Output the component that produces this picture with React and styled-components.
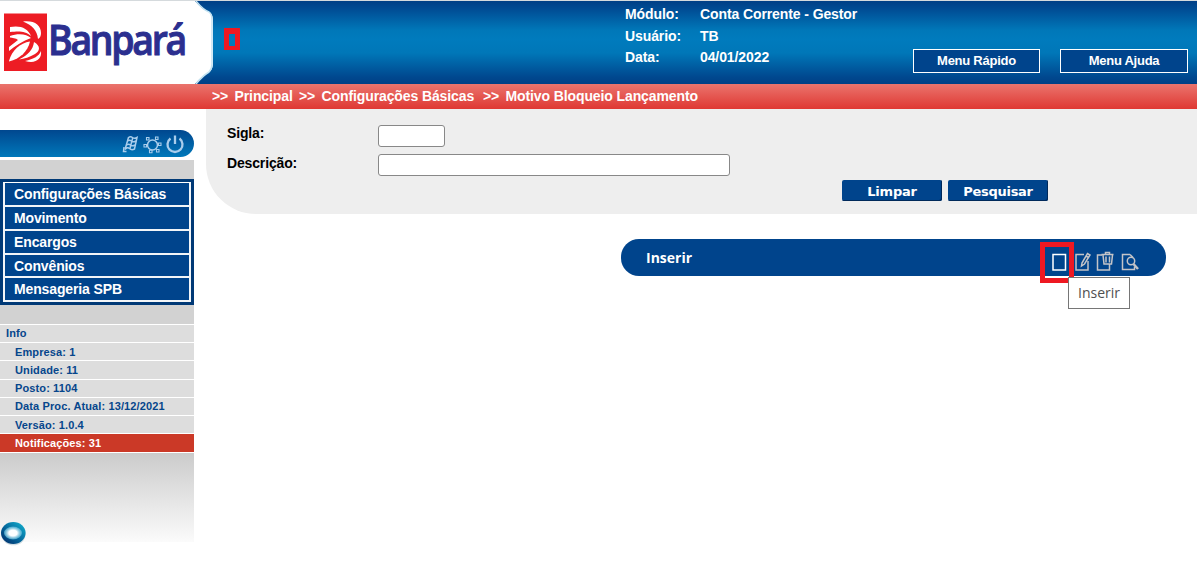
import React from 'react';
import styled, { createGlobalStyle } from 'styled-components';

const GlobalStyle = createGlobalStyle`
  * { box-sizing: border-box; }
  body {
    margin: 0;
    background: #fff;
    font-family: 'Liberation Sans', Arial, sans-serif;
    font-size: 14px;
    font-weight: bold;
    color: #000;
  }
`;

const Page = styled.div`
  width: 1197px;
  height: 565px;
  overflow: hidden;
`;

const Header = styled.header`
  height: 84px;
  display: flex;
  border-top: 1px solid #d5dadd;
  background: linear-gradient(#003f86 0, #004c94 8px, #0077b8 29px, #007bbd 38px, #0077b8 52px, #00488f 76px, #004085 83px);
  color: #fff;
`;

const LogoPanel = styled.div`
  width: 213px;
  height: 83px;
  svg { display: block; }
`;

const Marker = styled.span`
  width: 16px;
  height: 22px;
  margin: 27px 0 0 11px;
  border: 5px solid #ee1822;
  border-top-width: 6px;
  border-bottom-width: 4px;
`;

const Session = styled.dl`
  width: 288px;
  margin: 4px 0 0 385px;
  display: grid;
  grid-template-columns: 75px 1fr;
  grid-template-rows: 22px 21px 21px;
  line-height: 19px;
  letter-spacing: -0.1px;
  align-content: start;
`;
const Term = styled.dt``;
const Value = styled.dd`
  margin: 0;
  white-space: nowrap;
`;

const MenuButtons = styled.div`
  display: flex;
  gap: 20px;
  margin-top: 48px;
`;

const MenuButton = styled.button`
  width: ${(p) => p.$width}px;
  height: 24px;
  padding: 0 0 2px;
  border: 1px solid #fff;
  background: #00448c;
  color: #fff;
  font: bold 13px 'Liberation Sans', Arial, sans-serif;
  letter-spacing: -0.25px;
`;

const Breadcrumb = styled.nav`
  height: 25px;
  padding-left: 212px;
  display: flex;
  line-height: 25px;
  letter-spacing: -0.11px;
  white-space: pre;
  color: #fff;
  background: linear-gradient(#ea746d, #df3833);
`;
const Crumb = styled.span`
  width: ${(p) => p.$width}px;
  &::before { content: '>>'; margin-right: 6.4px; }
`;

const Body = styled.div`
  display: flex;
  gap: 12px;
`;

const Sidebar = styled.aside`
  width: 194px;
  padding-top: 21px;
`;

const SideTools = styled.div`
  height: 27px;
  border-radius: 0 14px 14px 0;
  background: linear-gradient(#00478f, #0078ba);
  svg { display: block; }
`;

const Strip = styled.div`
  height: 19px;
  background: #d2d2d2;
  margin-top: ${(p) => p.$top || 0}px;
`;

const Menu = styled.ul`
  margin: 0;
  height: 126px;
  padding: 3px;
  list-style: none;
  background: #003976;
`;

const MenuItem = styled.li`
  height: ${(p) => p.$height}px;
  padding-left: 9px;
  line-height: 22px;
  letter-spacing: -0.13px;
  color: #fff;
  background: #00448c;
  border: 2px solid #f2f5f8;
  border-top: ${(p) => (p.$first ? '1px solid #fff' : '0')};
`;

const Info = styled.ul`
  margin: 0;
  padding: 0;
  list-style: none;
  font-size: 11px;
`;
const InfoRow = styled.li`
  height: ${(p) => p.$height}px;
  border-top: 1px solid #fff;
  padding-left: ${(p) => (p.$head ? 6 : 15)}px;
  line-height: ${(p) => p.$line || 18}px;
  letter-spacing: 0.12px;
  color: ${(p) => (p.$alert ? '#fff' : '#06468c')};
  background: ${(p) => (p.$alert ? '#cb3927' : '#ddd')};
`;

const SideFoot = styled.div`
  height: 93px;
  margin-top: 1px;
  background: linear-gradient(#cbcbcb 0, #e2e2e2 42px, #fbfbfb 89px, #fff 89px);
  padding-top: 67px;
  svg { display: block; }
`;

const Main = styled.main`
  width: 991px;
`;

const Form = styled.form`
  height: 105px;
  padding: 16px 149px 0 21px;
  border-bottom-left-radius: 50px;
  background: #eee;
`;
const Field = styled.label`
  display: flex;
  align-items: flex-start;
  height: ${(p) => p.$height}px;
`;
const Label = styled.span`
  width: 151px;
  line-height: ${(p) => p.$line}px;
  letter-spacing: -0.15px;
`;
const Input = styled.input`
  width: ${(p) => p.$width}px;
  height: 22px;
  padding: 0 4px;
  border: 1px solid #888;
  border-radius: 3px;
  background: #fff;
`;
const Actions = styled.div`
  display: flex;
  justify-content: flex-end;
  gap: 6px;
`;
const ActionButton = styled.button`
  width: 100px;
  height: 21px;
  padding: 1px 0 0;
  border: 0;
  border-radius: 2px;
  background: #00448c;
  box-shadow: inset -1px -1px #00295a;
  color: #fff;
  font: bold 13px/19px 'DejaVu Sans', Verdana, sans-serif;
  letter-spacing: ${(p) => p.$spacing}px;
`;

const ResultBar = styled.section`
  position: relative;
  display: flex;
  justify-content: space-between;
  width: 545px;
  height: 37px;
  margin: 25px 0 0 415px;
  padding-left: 25px;
  border-radius: 18px;
  background: #00448c;
  color: #fff;
`;
const ResultTitle = styled.h2`
  margin: 0;
  font: bold 14px/38px 'Open Sans', Tahoma, sans-serif;
`;
const ResultIcons = styled.svg`
  display: block;
  margin-right: 20px;
`;
const Highlight = styled.span`
  position: absolute;
  left: 419px;
  top: 3px;
  width: 34px;
  height: 41px;
  border: 5px solid #ee1822;
`;
const Tooltip = styled.span`
  position: absolute;
  left: 447px;
  top: 38px;
  width: 62px;
  height: 32px;
  border: 1px solid #767676;
  background: #fff;
  color: #505050;
  font: 14px/30px 'Open Sans', 'Noto Sans', sans-serif;
  text-align: center;
`;

const Logo = () => (
  <svg width="213" height="83" viewBox="0 1 213 83">
    <path d="M0 1H195C199 6 204 10 209 12Q213 14 213 20V64Q213 69 209 72C204 75 199 79 195 84H0Z" fill="#fff" />
    <path d="M196 1C200 6 204 10 209 12Q212 14 212 20V64Q212 69 209 72C204 75 200 79 196 84" fill="none" stroke="#c4e4f2" strokeWidth="1.500" />
    <rect x="4" y="13.500" width="43" height="57.500" fill="#ed1c24" />
    <g fill="#fff">
      <path d="M23 21.500C34 20 41 25 41 33C41 36 40 38 38 39C37 30 32 25 23 21.500Z" />
      <path d="M10 27C20 25 28 28 31 36C25 31 20 31 10 32Z" />
      <path d="M10 36C18 33 27 34 31 38C23 41 15 46 9 51V47L18 40C16 38 12 38 10 37.500Z" />
      <path d="M9 61C12 50 20 43 30 41.500C28 51 20 59 9 61.500Z" />
      <path d="M34 42C41 46 40 51 35 54C30 57 24 59 19 59.500C28 55 33 50 34 42Z" />
      <path d="M25 61C34 59 39 56 41 51C42 59 36 64 25 61Z" />
    </g>
    <text x="48" y="55.300" textLength="137" lengthAdjust="spacingAndGlyphs" letterSpacing="-2.500" fontFamily="'Open Sans', sans-serif" fontSize="41" fontWeight="600" fill="#2b2f8f" stroke="#2b2f8f" strokeWidth="1">Banpará</text>
  </svg>
);

const SideIcons = () => (
  <svg width="194" height="27" viewBox="0 130 194 27" fill="none" stroke="#a9cdec">
    <g strokeWidth="1.500">
      <path d="M128.500 137.500q2-1.500 4 0t4.500 0L134.500 149q-3 1.500-5-.5t-4.500 1Z" />
      <path d="M132.700 138L129.800 149M127.500 141q2-1.500 4 0t4.500 0M126.500 145q2-1.500 4 0t4.500 0" />
      <path d="M124 147L123.500 151.500h3" />
    </g>
    <circle cx="152.500" cy="145" r="5" strokeWidth="1.500" />
    <g strokeWidth="1.100" fill="#0062a8">
      <path d="M146.500 137.500h2.500v2.500h-2.500zM155.500 137h2.500v2.500h-2.500zM144 144.500h2.500v2.500h-2.500zM158.500 143h2.500v2.500h-2.500zM149.500 150.300h2.500v2.500h-2.500zM156.500 149.500h2.500v2.500h-2.500z" />
    </g>
    <path d="M170.500 138.500A7.500 7.500 0 1 0 179.500 138.500M175 135.500V144" strokeWidth="2.300" />
  </svg>
);

const Orb = () => (
  <svg width="30" height="26" viewBox="0 520 30 26">
    <defs>
      <linearGradient id="orb" x1="0" y1="1" x2="1" y2="0">
        <stop offset="0" stopColor="#002562" />
        <stop offset=".45" stopColor="#04659a" />
        <stop offset="1" stopColor="#13b6d2" />
      </linearGradient>
      <radialGradient id="shine">
        <stop offset=".45" stopColor="#fff" />
        <stop offset="1" stopColor="#5cbcdc" stopOpacity=".7" />
      </radialGradient>
    </defs>
    <ellipse cx="13.500" cy="534.500" rx="12" ry="10.800" fill="#d2dde2" />
    <ellipse cx="13.300" cy="533" rx="12.300" ry="11" fill="url(#orb)" />
    <ellipse cx="13" cy="533" rx="9" ry="6.500" fill="url(#shine)" />
  </svg>
);

const MENU = [
  ['Configurações Básicas', 25],
  ['Movimento', 24],
  ['Encargos', 24],
  ['Convênios', 23],
  ['Mensageria SPB', 24],
];

const INFO = [
  { text: 'Empresa: 1', height: 18 },
  { text: 'Unidade: 11', height: 19 },
  { text: 'Posto: 1104', height: 18, line: 16 },
  { text: 'Data Proc. Atual: 13/12/2021', height: 18, line: 16 },
  { text: 'Versão: 1.0.4', height: 18 },
  { text: 'Notificações: 31', height: 19, alert: true },
];

export default function App() {
  return (
    <Page>
      <GlobalStyle />
      <Header>
        <LogoPanel><Logo /></LogoPanel>
        <Marker />
        <Session>
          <Term>Módulo:</Term><Value>Conta Corrente - Gestor</Value>
          <Term>Usuário:</Term><Value>TB</Value>
          <Term>Data:</Term><Value>04/01/2022</Value>
        </Session>
        <MenuButtons>
          <MenuButton $width={127}>Menu Rápido</MenuButton>
          <MenuButton $width={128}>Menu Ajuda</MenuButton>
        </MenuButtons>
      </Header>
      <Breadcrumb>
        <Crumb $width={87}>Principal</Crumb>
        <Crumb $width={184}>Configurações Básicas</Crumb>
        <Crumb $width={230}>Motivo Bloqueio Lançamento</Crumb>
      </Breadcrumb>
      <Body>
        <Sidebar>
          <SideTools><SideIcons /></SideTools>
          <Strip $top={3} />
          <Menu>
            {MENU.map(([text, height], i) => (
              <MenuItem key={text} $height={height} $first={i === 0}>{text}</MenuItem>
            ))}
          </Menu>
          <Strip />
          <Info>
            <InfoRow $head $height={18} $line={16}>Info</InfoRow>
            {INFO.map((row) => (
              <InfoRow key={row.text} $height={row.height} $line={row.line} $alert={row.alert}>{row.text}</InfoRow>
            ))}
          </Info>
          <SideFoot><Orb /></SideFoot>
        </Sidebar>
        <Main>
          <Form>
            <Field $height={29}><Label $line={17}>Sigla:</Label><Input $width={67} /></Field>
            <Field $height={26}><Label $line={19}>Descrição:</Label><Input $width={352} /></Field>
            <Actions>
              <ActionButton type="button" $spacing={-0.2}>Limpar</ActionButton>
              <ActionButton type="button" $spacing={-0.3}>Pesquisar</ActionButton>
            </Actions>
          </Form>
          <ResultBar>
            <ResultTitle>Inserir</ResultTitle>
            <ResultIcons width="106" height="37" viewBox="1040 239 106 37" fill="none" stroke="#c3c4c8" strokeWidth="1.500">
              <path d="M1053 254.500h12.500v15.500h-12.500z" stroke="#fff" />
              <path d="M1084 254.500h-8v15.500h12v-9" />
              <path d="M1082 263l5.500-9.500 2.500 1.500-5.500 9-3 2zM1086 256l2.500 1.500" />
              <path d="M1102 255h-4.500v15h12v-6" />
              <path d="M1101.500 254.500h12M1105.500 254v-1.500h4v1.500M1103 255l1 9h7.500l1-9M1106 256.500v6M1109.500 256.500v6" />
              <path d="M1130 254.500h-7.500v15h12v-3M1130 254.500l3 3" />
              <circle cx="1131" cy="261" r="3.700" />
              <path d="M1133.500 264l4.500 5" strokeWidth="2.500" />
            </ResultIcons>
            <Highlight />
            <Tooltip>Inserir</Tooltip>
          </ResultBar>
        </Main>
      </Body>
    </Page>
  );
}
